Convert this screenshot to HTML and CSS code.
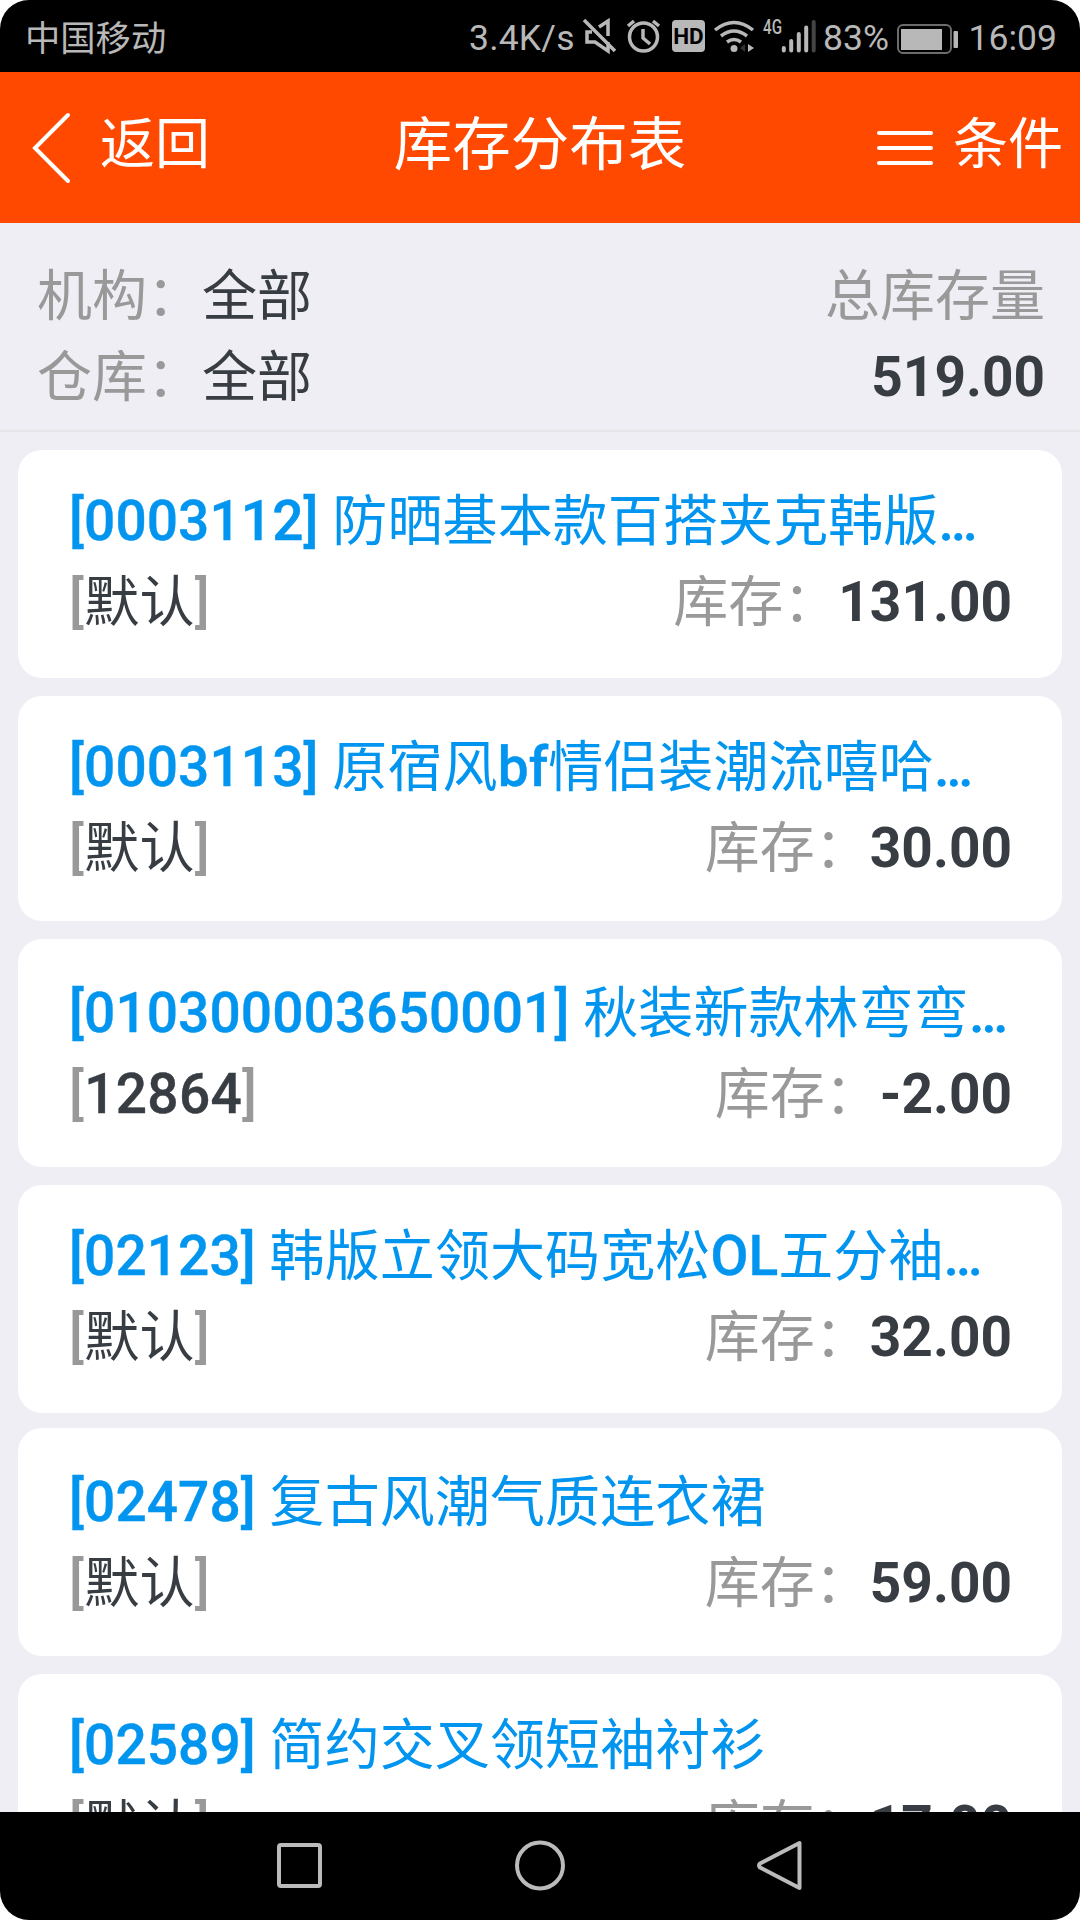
FILE: index.html
```html
<!DOCTYPE html>
<html lang="zh-CN">
<head>
    <meta charset="UTF-8">
    <meta name="viewport" content="width=device-width, initial-scale=1.0">
    <title>库存分布表</title>
    <link rel="stylesheet" href="styles.css">
</head>
<body>
    <div class="screen">
        <div class="status-bar">
            <span class="carrier">中国移动</span>
            <span class="speed">3.4K/s</span>
            <!-- mute, alarm, HD, wifi, signal -->
            <svg class="status-icons" width="240" height="72" viewBox="580 0 240 72" fill="none" stroke="#b8b8b8" stroke-width="3.5">
                <path d="M592 32h-5v10h8l13 9V42M599 27l9-6v15M584 20l31 31"/>
                <circle cx="643.5" cy="37" r="14"/>
                <path d="M643 29v9l7 6M628 26l6-5M659 26l-6-5"/>
                <rect x="672" y="20" width="33" height="32" rx="4" fill="#b8b8b8" stroke="none"/>
                <text x="688.5" y="43.5" class="hd">HD</text>
                <path d="M715 30q19-15 38 0M721 36q13-10 26 0M727 42q7-5 14 0"/>
                <circle cx="734" cy="48.5" r="3.5" fill="#b8b8b8" stroke="none"/>
                <path d="M745 44l-5 4 5 4z" fill="#333" stroke="none"/>
                <path d="M748 44v8l6-4z" fill="#b8b8b8" stroke="none"/>
                <text x="763" y="34" class="net" textLength="19" lengthAdjust="spacingAndGlyphs">4G</text>
                <path d="M783.8 48v2.5M791.2 41v9.5M798.8 34v16.5M806.2 27.5v23" stroke-width="4" stroke-linecap="round"/>
                <path d="M813.7 22v28.5" stroke="#444" stroke-width="4" stroke-linecap="round"/>
            </svg>
            <span class="percent">83%</span>
            <svg class="battery" width="64" height="32" viewBox="0 0 64 32" fill="none">
                <rect x="2" y="3" width="53" height="28" rx="5" stroke="#6c6c6c" stroke-width="2"/>
                <rect x="5" y="7" width="41" height="21" fill="#b8b8b8"/>
                <rect x="57.5" y="9" width="4.5" height="17" rx="1" fill="#b8b8b8"/>
            </svg>
            <span class="clock">16:09</span>
        </div>

        <div class="header">
            <div class="back">
                <svg width="40" height="72" viewBox="0 0 40 72" fill="none" stroke="#fff" stroke-width="4" stroke-linecap="round">
                    <path d="M37 3L4 36l33 33"/>
                </svg>
                <span>返回</span>
            </div>
            <h1>库存分布表</h1>
            <div class="filter">
                <svg width="56" height="36" viewBox="0 0 56 36" stroke="#fff" stroke-width="4" stroke-linecap="round">
                    <path d="M2 3h52M2 18h52M2 33h52"/>
                </svg>
                <span>条件</span>
            </div>
        </div>

        <div class="summary">
            <div>
                <p><span class="label">机构：</span>全部</p>
                <p><span class="label">仓库：</span>全部</p>
            </div>
            <div class="total">
                <p class="label">总库存量</p>
                <p class="num">519.00</p>
            </div>
        </div>

        <div class="list">
            <div class="card">
                <div class="name"><b>[0003112]</b> 防晒基本款百搭夹克韩版<b>…</b></div>
                <div class="row">
                    <div class="spec"><i>[</i>默认<i>]</i></div>
                    <div class="stock"><span class="label">库存：</span><span class="num">131.00</span></div>
                </div>
            </div>
            <div class="card">
                <div class="name"><b>[0003113]</b> 原宿风<b>bf</b>情侣装潮流嘻哈<b>…</b></div>
                <div class="row">
                    <div class="spec"><i>[</i>默认<i>]</i></div>
                    <div class="stock"><span class="label">库存：</span><span class="num">30.00</span></div>
                </div>
            </div>
            <div class="card">
                <div class="name"><b>[010300003650001]</b> 秋装新款林弯弯<b>…</b></div>
                <div class="row">
                    <div class="spec"><i>[</i><b>12864</b><i>]</i></div>
                    <div class="stock"><span class="label">库存：</span><span class="num">-2.00</span></div>
                </div>
            </div>
            <div class="card">
                <div class="name"><b>[02123]</b> 韩版立领大码宽松<b>OL</b>五分袖<b>…</b></div>
                <div class="row">
                    <div class="spec"><i>[</i>默认<i>]</i></div>
                    <div class="stock"><span class="label">库存：</span><span class="num">32.00</span></div>
                </div>
            </div>
            <div class="card">
                <div class="name"><b>[02478]</b> 复古风潮气质连衣裙</div>
                <div class="row">
                    <div class="spec"><i>[</i>默认<i>]</i></div>
                    <div class="stock"><span class="label">库存：</span><span class="num">59.00</span></div>
                </div>
            </div>
            <div class="card">
                <div class="name"><b>[02589]</b> 简约交叉领短袖衬衫</div>
                <div class="row">
                    <div class="spec"><i>[</i>默认<i>]</i></div>
                    <div class="stock"><span class="label">库存：</span><span class="num">17.00</span></div>
                </div>
            </div>
        </div>

        <div class="nav-bar">
            <svg width="52" height="52" viewBox="0 0 52 52"><rect x="5" y="5" width="41" height="41" rx="2"/></svg>
            <svg width="52" height="52" viewBox="0 0 52 52"><circle cx="26" cy="25.5" r="23"/></svg>
            <svg width="52" height="52" viewBox="0 0 52 52"><path d="M45.500 3v45L6 27.500q-2-2 0-4z" stroke-linejoin="round"/></svg>
        </div>
    </div>
</body>
</html>
```
FILE: styles.css
```css
* {
    box-sizing: border-box;
}

body {
    margin: 0;
    background-color: #fff;
    color: #373d42;
    font-family: Roboto, 'Noto Sans CJK SC', sans-serif;
    font-size: 55px;
}

p, h1 {
    margin: 0;
    font-weight: 400;
}

b {
    font-weight: 500;
    -webkit-text-stroke: 0.4px currentColor;
}

.screen {
    display: flex;
    flex-direction: column;
    width: 1080px;
    height: 1920px;
    overflow: hidden;
    border-radius: 29px;
    background-color: #efeef4;
}

/* status bar */
.status-bar {
    display: flex;
    flex: none;
    align-items: center;
    height: 72px;
    padding: 3px 23px 0 25px;
    background-color: #000;
    color: #b8b8b8;
    font-size: 35.5px;
    line-height: 70px;
    white-space: nowrap;
}

.carrier {
    width: 444px;
    padding-top: 2px;
    font-size: 35.3px;
}

.speed {
    width: 111px;
    letter-spacing: 0.2px;
}

.status-icons {
    flex: none;
    margin-top: -3px;
}

.hd {
    fill: #000;
    stroke: none;
    font-size: 22.5px;
    font-weight: 700;
    text-anchor: middle;
}

.net {
    fill: #b8b8b8;
    stroke: none;
    font-size: 20px;
    font-weight: 500;
}

.percent {
    width: 73px;
    margin-left: 3px;
}

.battery {
    flex: none;
}

.clock {
    margin-left: auto;
}

/* title bar */
.header {
    display: grid;
    grid-template-columns: 1fr auto 1fr;
    flex: none;
    align-items: center;
    height: 151px;
    padding: 0 17px 0 31px;
    background-color: #ff4800;
    color: #fff;
    font-size: 55px;
}

.header svg {
    flex: none;
}

.header span {
    line-height: 80px;
    margin-top: -8px;
}

.header h1 {
    margin: -5px 14px 0 0;
    font-size: 58.5px;
    line-height: 80px;
}

.back, .filter {
    display: flex;
    align-items: center;
}

.back {
    gap: 29px;
}

.filter {
    justify-content: flex-end;
    gap: 20px;
}

/* totals */
.summary {
    display: flex;
    flex: none;
    justify-content: space-between;
    height: 209px;
    padding: 33px 35px 0 37px;
    border-bottom: 2px solid #e6e6e8;
    line-height: 81px;
}

.total {
    text-align: right;
}

.label {
    color: #999;
}

.num {
    font-weight: 700;
}

/* stock list */
.list {
    display: flex;
    flex: 1;
    flex-direction: column;
    gap: 18px;
    min-height: 0;
    padding: 18px 18px 0;
    overflow: hidden;
}

.card {
    flex: none;
    height: 228px;
    padding: 31px 50px 0 51px;
    border-radius: 24px;
    background-color: #fff;
    line-height: 81px;
    white-space: nowrap;
}

.card:nth-child(2) {
    height: 225px;
}

.card:nth-child(3),
.card:nth-child(5) {
    padding-top: 34px;
}

.card:nth-child(5) {
    margin-top: -3px;
}

.name {
    color: #0295f0;
    letter-spacing: 0.1px;
}

.row {
    display: flex;
    justify-content: space-between;
}

.spec {
    letter-spacing: 0.3px;
}

.spec i {
    color: #999;
    font-style: normal;
    font-weight: 500;
}

/* system buttons */
.nav-bar {
    display: flex;
    flex: none;
    align-items: center;
    justify-content: center;
    gap: 188px;
    height: 108px;
    background-color: #000;
}

.nav-bar svg {
    fill: none;
    stroke: #bbb;
    stroke-width: 4;
}
```
